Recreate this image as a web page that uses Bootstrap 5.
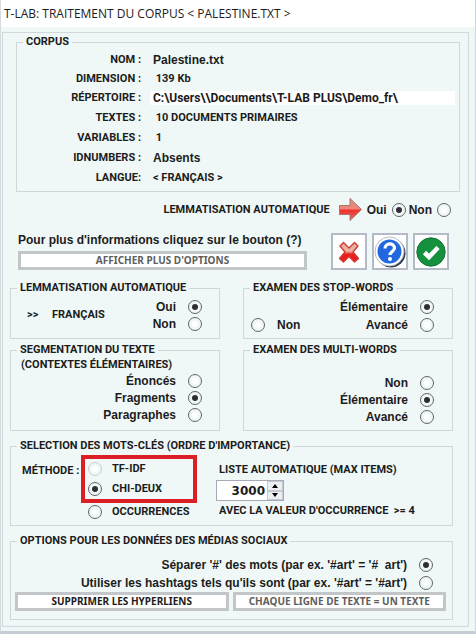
<!DOCTYPE html>
<html lang="fr">
<head>
<meta charset="utf-8">
<meta name="viewport" content="width=device-width, initial-scale=1">
<title>T-LAB: TRAITEMENT DU CORPUS</title>
<link href="https://cdn.jsdelivr.net/npm/bootstrap@5.3.0/dist/css/bootstrap.min.css" rel="stylesheet">
<style>
  body { font-family: "Liberation Sans", Arial, sans-serif; font-size: 12px; font-weight: 700; line-height: 14px; color: #1c1c20; background: #eff8f7; }
  .window { border-right: 1px solid #d3d7e2; border-bottom: 3px solid #c6cbd6; border-left: 1px solid #d6dbe2; }
  .title-bar { font: 400 12px/27px "Open Sans", "Noto Sans", sans-serif; background: #fff; padding-left: 3px; }
  .panel { border: 1px solid #d3d8dc; margin: 5px 6px 4px 1px; padding: 2px 0 6px; }
  .caps, legend { font-family: Roboto, sans-serif; font-size: 11px; line-height: 14px; }
  fieldset { border: 1px solid #d0d6d9; }
  legend { float: none; width: auto; margin: 0 0 0 6px; padding: 0 3px; font-weight: 700; white-space: nowrap; }
  .corpus { margin: 0 8px 0 13px; padding: 1px 4px 3px 0; }
  .corpus dl { display: grid; grid-template-columns: 124px 1fr; grid-template-rows: 19px 19px repeat(5, 20px); column-gap: 9px; align-items: center; }
  .corpus dt { text-align: right; }
  .corpus dd { padding-left: 3px; white-space: pre; }
  .path { background: #fff; font-family: Roboto, sans-serif; }
  .sections { margin: 0 15px 0 7px; }
  .lemma-row { padding: 5px 2px 11px 0; }
  .lemma-row .radio { margin: 0 3px 0 5px; }
  .radio { appearance: none; flex: none; width: 14px; height: 14px; margin: 0; padding: 3px; border: 1px solid #62626a; border-radius: 50%; background: #fff content-box; }
  .radio:checked { background: #fff radial-gradient(circle, #302c34 0 3px, #fff 4px) content-box; }
  .radio:disabled { border-color: #ccc; }
  .flat { padding: 0; border: 3px solid #c3c6c8; border-radius: 0; background: #fff; font: 700 10px/13px "Noto Sans", sans-serif; color: #1c1c20; }
  .flat.dim { color: #5e5e5e; }
  .tools { gap: 5px; }
  .tool { width: 36px; height: 37px; padding: 0; border: 2px solid #b4bac6; border-radius: 0; background: #fff; }
  .pairs { display: grid; grid-template-columns: 1fr 1fr; column-gap: 23px; row-gap: 4px; margin-top: 11px; }
  .choice { height: 17px; gap: 12px; }
  .left-set { padding: 3px 17px 6px 0; }
  .right-set { padding: 3px 18px 3px 7px; }
  .right-set legend { margin-left: -1px; }
  .right-set .choice { height: 18px; }
  .seg-set { padding: 1px 17px 7px 0; }
  .seg-set p { padding-left: 10px; }
  .multi-set { padding: 17px 18px 4px 0; }
  .words { margin-top: 8px; padding: 2px 0 4px; }
  .method-label { width: 70px; padding: 9px 0 0 11px; }
  .marked { border: 4px solid #dc1f24; padding: 0 3px; width: 116px; }
  .marked .choice { height: 20px; gap: 10px; }
  .method .other { height: 18px; gap: 10px; padding-left: 7px; }
  .amount { margin-left: 22px; }
  .spin { border: 1px solid #a5abb6; background: #fff; width: 68px; height: 21px; margin: 3px 0 3px -3px; }
  .spin input { width: 50px; border: 0; padding: 0 2px; text-align: right; font: 700 12px/18px "DejaVu Sans", sans-serif; color: #1c1c20; appearance: textfield; background: transparent; }
  .spin input::-webkit-inner-spin-button { display: none; }
  .spin button { width: 14px; padding: 0; border: 1px solid #c6c9d2; background: #eceef1; line-height: 0; }
  .social { margin-top: 8px; padding: 8px 6px 8px 0; }
  .social .choice { height: 18px; padding-right: 13px; }
  .social .actions { padding-left: 4px; }
</style>
<script src="https://cdn.jsdelivr.net/npm/bootstrap@5.3.0/dist/js/bootstrap.bundle.min.js" defer></script>
</head>
<body>
<div class="window">
  <header class="title-bar">T-LAB: TRAITEMENT DU CORPUS &lt; PALESTINE.TXT &gt;</header>
  <main class="panel">
    <fieldset class="corpus">
      <legend>CORPUS</legend>
      <dl class="mb-0">
        <dt class="caps">NOM :</dt><dd class="mb-0">Palestine.txt</dd>
        <dt class="caps">DIMENSION :</dt><dd class="mb-0 caps"> 139 Kb</dd>
        <dt class="caps">RÉPERTOIRE :</dt><dd class="mb-0 path">C:\Users\\Documents\T-LAB PLUS\Demo_fr\</dd>
        <dt class="caps">TEXTES :</dt><dd class="mb-0 caps"> 10 DOCUMENTS PRIMAIRES</dd>
        <dt class="caps">VARIABLES :</dt><dd class="mb-0 caps"> 1</dd>
        <dt class="caps">IDNUMBERS :</dt><dd class="mb-0">Absents</dd>
        <dt class="caps">LANGUE:</dt><dd class="mb-0 caps">&lt; FRANÇAIS &gt;</dd>
      </dl>
    </fieldset>

    <div class="sections">
      <div class="lemma-row d-flex justify-content-end align-items-center" role="radiogroup" aria-labelledby="lem">
        <span class="caps me-2" id="lem">LEMMATISATION AUTOMATIQUE</span>
        <svg class="me-1" width="25" height="25" viewBox="0 0 25 25" aria-hidden="true"><defs><linearGradient id="ar" x2="0" y2="1"><stop offset=".1" stop-color="#dd8d80"/><stop offset=".45" stop-color="#f0877c"/><stop offset=".55" stop-color="#ee3030"/><stop offset="1" stop-color="#e07468"/></linearGradient></defs><path d="M1.500 8.500H12V1.500L23.500 12.500L12 23.500V17.500H1.500Z" fill="url(#ar)" stroke="#a8766a"/></svg>
        <label for="lo">Oui</label><input class="radio" type="radio" name="lem" id="lo" checked>
        <label for="ln">Non</label><input class="radio me-0" type="radio" name="lem" id="ln">
      </div>

      <div class="d-flex align-items-end justify-content-between ps-2">
        <div class="flex-grow-1 me-4">
          <p class="mb-1 text-nowrap">Pour plus d'informations cliquez sur le bouton (?)</p>
          <button class="flat dim w-100 d-block" type="button">AFFICHER PLUS D'OPTIONS</button>
        </div>
        <div class="tools d-flex pe-1">
          <button class="tool" type="button" aria-label="Annuler"><svg width="30" height="30" viewBox="0 0 30 30"><defs><linearGradient id="xr" x2="0" y2="1"><stop offset=".45" stop-color="#e9b1a0"/><stop offset=".6" stop-color="#ec1c1f"/></linearGradient></defs><path d="M6 9L9.500 5.500L15 11L20.500 5.500L24 9L19 15L24.500 21.500L20.500 25L15 19.500L9.500 25L5.500 21.500L11 15Z" fill="url(#xr)" stroke="#cf3b32" stroke-width="1.400" stroke-linejoin="round"/></svg></button>
          <button class="tool" type="button" aria-label="Aide"><svg width="32" height="32" viewBox="0 0 32 32"><circle cx="17" cy="17" r="14.500" fill="#333a48"/><circle cx="15.500" cy="15.500" r="14.500" fill="#fff" stroke="#b5bac4"/><circle cx="15.500" cy="15.500" r="12" fill="#2167e0"/><path d="M11 12.500C11 6.500 20.500 6.500 20.500 12C20.500 15.500 16 15.500 16 19" fill="none" stroke="#fff" stroke-width="3.200"/><circle cx="16" cy="23" r="2" fill="#fff"/></svg></button>
          <button class="tool" type="button" aria-label="Valider"><svg width="32" height="32" viewBox="0 0 32 32"><circle cx="16" cy="16" r="14.200" fill="#15913d" stroke="#16713a"/><path d="M9.500 16.500L14 21L23 11.500" fill="none" stroke="#fff" stroke-width="4.600"/></svg></button>
        </div>
      </div>

      <div class="pairs">
        <fieldset class="left-set">
          <legend>LEMMATISATION AUTOMATIQUE</legend>
          <div class="d-flex align-items-center justify-content-between ps-3">
            <span class="caps">&gt;&gt;&nbsp;&nbsp;&nbsp;&nbsp; FRANÇAIS</span>
            <div>
              <div class="choice d-flex align-items-center justify-content-end"><label for="a1">Oui</label><input class="radio" type="radio" name="a" id="a1" checked></div>
              <div class="choice d-flex align-items-center justify-content-end"><label for="a2">Non</label><input class="radio" type="radio" name="a" id="a2"></div>
            </div>
          </div>
        </fieldset>
        <fieldset class="right-set">
          <legend>EXAMEN DES STOP-WORDS</legend>
          <div class="choice d-flex align-items-center justify-content-end"><label for="b1">Élémentaire</label><input class="radio" type="radio" name="b" id="b1" checked></div>
          <div class="d-flex justify-content-between">
            <div class="choice d-flex align-items-center"><input class="radio" type="radio" name="b" id="b2"><label for="b2">Non</label></div>
            <div class="choice d-flex align-items-center"><label for="b3">Avancé</label><input class="radio" type="radio" name="b" id="b3"></div>
          </div>
        </fieldset>
        <fieldset class="seg-set">
          <legend>SEGMENTATION DU TEXTE</legend>
          <p class="caps mb-0">(CONTEXTES ÉLÉMENTAIRES)</p>
          <div class="choice d-flex align-items-center justify-content-end"><label for="c1">Énoncés</label><input class="radio" type="radio" name="c" id="c1"></div>
          <div class="choice d-flex align-items-center justify-content-end"><label for="c2">Fragments</label><input class="radio" type="radio" name="c" id="c2" checked></div>
          <div class="choice d-flex align-items-center justify-content-end"><label for="c3">Paragraphes</label><input class="radio" type="radio" name="c" id="c3"></div>
        </fieldset>
        <fieldset class="multi-set">
          <legend>EXAMEN DES MULTI-WORDS</legend>
          <div class="choice d-flex align-items-center justify-content-end"><label for="d1">Non</label><input class="radio" type="radio" name="d" id="d1"></div>
          <div class="choice d-flex align-items-center justify-content-end"><label for="d2">Élémentaire</label><input class="radio" type="radio" name="d" id="d2" checked></div>
          <div class="choice d-flex align-items-center justify-content-end"><label for="d3">Avancé</label><input class="radio" type="radio" name="d" id="d3"></div>
        </fieldset>
      </div>

      <fieldset class="words">
        <legend>SELECTION DES MOTS-CLÉS (ORDRE D'IMPORTANCE)</legend>
        <div class="d-flex">
          <span class="caps method-label text-nowrap">MÉTHODE :</span>
          <div class="method">
            <div class="marked">
              <div class="choice d-flex align-items-center"><input class="radio" type="radio" name="m" id="m1" disabled><label class="caps" for="m1">TF-IDF</label></div>
              <div class="choice d-flex align-items-center"><input class="radio" type="radio" name="m" id="m2" checked><label class="caps" for="m2">CHI-DEUX</label></div>
            </div>
            <div class="other d-flex align-items-center"><input class="radio" type="radio" name="m" id="m3"><label class="caps" for="m3">OCCURRENCES</label></div>
          </div>
          <div class="amount pt-2">
            <label class="caps d-block" for="items">LISTE AUTOMATIQUE (MAX ITEMS)</label>
            <div class="spin d-flex">
              <input type="number" id="items" value="3000">
              <div class="d-flex flex-column flex-grow-1">
                <button class="w-100 flex-fill" type="button" aria-label="Augmenter"><svg width="6" height="4" viewBox="0 0 6 4"><path d="M0 4L3 0L6 4Z"/></svg></button>
                <button class="w-100 flex-fill" type="button" aria-label="Diminuer"><svg width="6" height="4" viewBox="0 0 6 4"><path d="M0 0L3 4L6 0Z"/></svg></button>
              </div>
            </div>
            <p class="caps mb-0">AVEC LA VALEUR D'OCCURRENCE&nbsp; &gt;= 4</p>
          </div>
        </div>
      </fieldset>

      <fieldset class="social">
        <legend>OPTIONS POUR LES DONNÉES DES MÉDIAS SOCIAUX</legend>
        <div class="choice d-flex align-items-center justify-content-end"><label for="s1">Séparer '#' des mots (par ex. '#art' = '#&nbsp; art')</label><input class="radio" type="radio" name="s" id="s1" checked></div>
        <div class="choice d-flex align-items-center justify-content-end"><label for="s2">Utiliser les hashtags tels qu'ils sont (par ex. '#art' = '#art')</label><input class="radio" type="radio" name="s" id="s2"></div>
        <div class="actions d-flex gap-1">
          <button class="flat w-50" type="button">SUPPRIMER LES HYPERLIENS</button>
          <button class="flat dim w-50" type="button">CHAQUE LIGNE DE TEXTE = UN TEXTE</button>
        </div>
      </fieldset>
    </div>
  </main>
</div>
</body>
</html>
